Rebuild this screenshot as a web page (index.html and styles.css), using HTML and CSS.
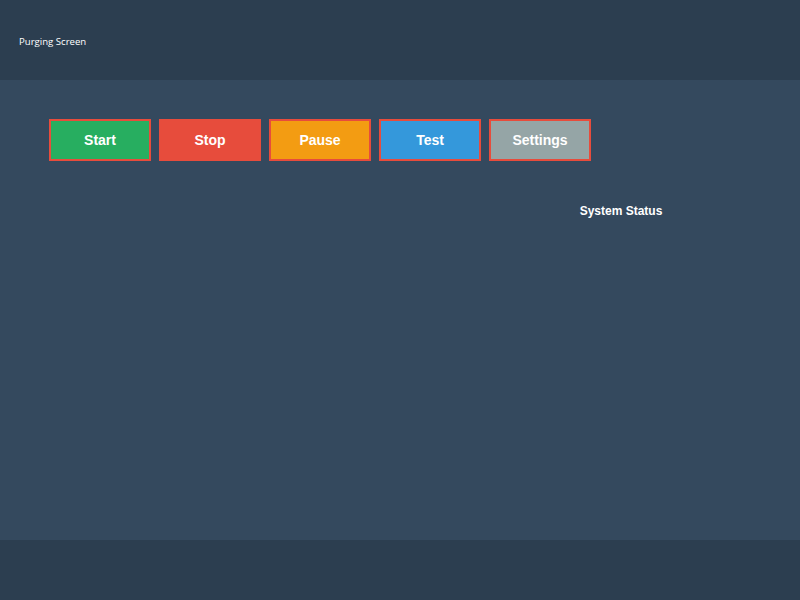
FILE: index.html
```html
<!DOCTYPE html>
<html>
<head>
<meta charset="utf-8">
<link rel="stylesheet" href="styles.css">
</head>
<body>
<header class="top">
  <span class="title">Purging Screen</span>
</header>
<main class="content">
  <div class="controls">
    <button class="btn btn-start">Start</button>
    <button class="btn btn-stop">Stop</button>
    <button class="btn btn-pause">Pause</button>
    <button class="btn btn-test">Test</button>
    <button class="btn btn-settings">Settings</button>
  </div>
  <div class="panels">
    <div class="left"></div>
    <section class="status">
      <h2 class="status-title">System Status</h2>
    </section>
  </div>
</main>
<footer class="bottom"></footer>
</body>
</html>
```
FILE: styles.css
```css
html, body {
  margin: 0;
  padding: 0;
  width: 800px;
  height: 600px;
  overflow: hidden;
}
body {
  display: flex;
  flex-direction: column;
  background: #2c3e50;
  font-family: "Liberation Sans", Arial, sans-serif;
}
.top {
  height: 80px;
  background: #2c3e50;
  display: flex;
  align-items: center;
  padding-left: 19px;
  box-sizing: border-box;
}
.title {
  color: #ffffff;
  font-family: "Open Sans", sans-serif;
  font-size: 9.6px;
  margin-top: 3px;
}
.content {
  height: 460px;
  background: #34495e;
  box-sizing: border-box;
  padding: 39px 49px 0 49px;
}
.controls {
  display: flex;
  gap: 8px;
}
.btn {
  width: 102px;
  height: 42px;
  border: 2px solid #e74c3c;
  box-sizing: border-box;
  color: #ffffff;
  font-family: "Liberation Sans", Arial, sans-serif;
  font-weight: bold;
  font-size: 14px;
  padding: 0;
  margin: 0;
}
.btn-start { background: #27ae60; }
.btn-stop { background: #e74c3c; }
.btn-pause { background: #f39c12; }
.btn-test { background: #3498db; }
.btn-settings { background: #95a5a6; }
.panels {
  display: flex;
  margin-top: 43px;
}
.left {
  flex: 1;
}
.status {
  width: 200px;
  margin-right: 30px;
}
.status-title {
  margin: 0;
  color: #ffffff;
  font-size: 12px;
  font-weight: bold;
  text-align: center;
  line-height: 14px;
}
.bottom {
  height: 60px;
  background: #2c3e50;
}
```
